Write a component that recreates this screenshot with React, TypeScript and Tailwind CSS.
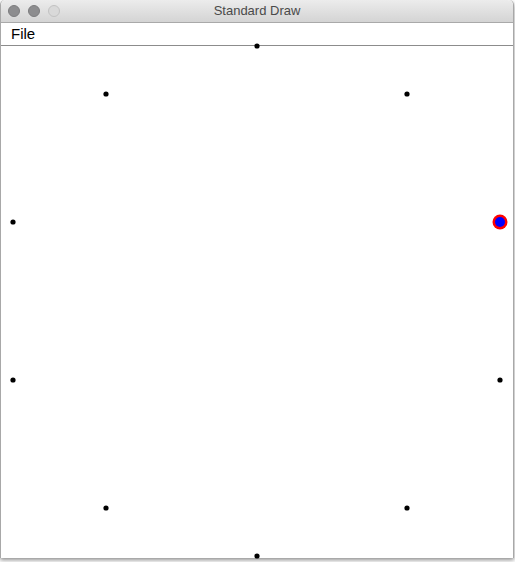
const dots: [number, number][] = [
  [256, 0],
  [105, 48],
  [406, 48],
  [12, 176],
  [12, 334],
  [499, 334],
  [105, 462],
  [406, 462],
  [256, 510],
];

export default function App() {
  return (
    <div className="w-[515px] h-[562px] bg-white overflow-hidden">
      <div className="w-[514px] h-[558px] flex flex-col border-x border-[#a8a8a8] rounded-t-[5px] shadow-[0_2px_4px_rgba(0,0,0,0.45)] bg-white">
        <div className="h-[23px] shrink-0 relative flex items-center justify-center rounded-t-[5px] bg-gradient-to-b from-[#ececec] to-[#d4d4d4] border-b border-[#a9a9a9]">
          <div className="absolute left-[7px] top-[5px] flex gap-[8px]">
            <span className="w-[12px] h-[12px] rounded-full bg-[#8d8d8f] border border-[#7c7c7e]" />
            <span className="w-[12px] h-[12px] rounded-full bg-[#8d8d8f] border border-[#7c7c7e]" />
            <span className="w-[12px] h-[12px] rounded-full bg-[#d9d9d9] border border-[#c2c2c2]" />
          </div>
          <span className="text-[13px] text-[#4a4a4a] font-['Liberation_Sans',sans-serif]">Standard Draw</span>
        </div>
        <div className="h-[23px] shrink-0 flex items-center px-[10px] bg-white border-b border-[#8c8c8c]">
          <span className="text-[15px] text-black font-['Liberation_Sans',sans-serif]">File</span>
        </div>
        <svg className="flex-1 w-full overflow-visible">
          {dots.map(([x, y], i) => (
            <circle key={i} cx={x} cy={y} r={2.6} fill="#000" />
          ))}
          <circle cx={499} cy={176} r={7.5} fill="#ff0000" />
          <circle cx={499} cy={176} r={5} fill="#0000ff" />
        </svg>
      </div>
    </div>
  );
}
